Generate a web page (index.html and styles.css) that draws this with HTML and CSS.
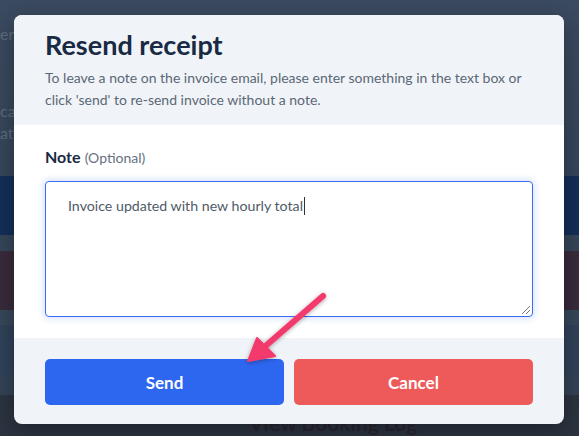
FILE: index.html
```html
<!DOCTYPE html>
<html lang="en">
<head>
<meta charset="utf-8">
<title>Resend receipt</title>
<link rel="stylesheet" href="styles.css">
</head>
<body>
<div class="page">
  <div class="bg-top">
    <div class="frag frag-er">er</div>
    <div class="frag frag-cat">cat</div>
    <div class="frag frag-ati">ati</div>
  </div>
  <div class="band band-blue"></div>
  <div class="band band-gap1"></div>
  <div class="band band-purple"></div>
  <div class="band band-gap2"></div>
  <div class="band band-slate"></div>
  <div class="band band-slate2"></div>
  <div class="bg-bottom"><span class="log">View Booking Log</span></div>
</div>

<div class="modal">
  <div class="modal-header">
    <h1 class="title">Resend receipt</h1>
    <p class="desc">To leave a note on the invoice email, please enter something in the text box or click 'send' to re-send invoice without a note.</p>
  </div>
  <div class="modal-body">
    <label class="label" for="note"><span class="label-main">Note</span> <span class="label-opt">(Optional)</span></label>
    <div class="textarea" id="note"><span>Invoice updated with new hourly total</span><span class="caret"></span><span class="grip"></span></div>
  </div>
  <div class="modal-footer">
    <button class="btn btn-send">Send</button>
    <button class="btn btn-cancel">Cancel</button>
  </div>
</div>

<svg class="arrow" width="579" height="436" viewBox="0 0 579 436" aria-hidden="true">
  <defs>
    <filter id="sh" x="-20%" y="-20%" width="140%" height="140%">
      <feDropShadow dx="0" dy="1" stdDeviation="2" flood-color="#000" flood-opacity="0.35"/>
    </filter>
  </defs>
  <g filter="url(#sh)">
    <line x1="323" y1="296" x2="262" y2="349" stroke="#f23a6c" stroke-width="6" stroke-linecap="round"/>
    <polygon points="248,361 257,338 275,356" fill="#f23a6c" stroke="#f23a6c" stroke-width="2" stroke-linejoin="round"/>
  </g>
</svg>
</body>
</html>
```

FILE: styles.css
```css
* { box-sizing: border-box; }
html, body { margin: 0; padding: 0; }
body {
  width: 579px;
  height: 436px;
  overflow: hidden;
  font-family: Lato, "Open Sans", sans-serif;
  position: relative;
  background: #2f3b4b;
}
.page {
  display: flex;
  flex-direction: column;
  height: 436px;
}
.bg-top {
  height: 176px;
  background: linear-gradient(180deg, #3b4b60 0%, #36465b 100%);
  display: flex;
  flex-direction: column;
}
.frag {
  color: #5f6c7d;
  font-size: 16px;
  line-height: 20px;
}
.frag-er { margin-top: 24px; }
.frag-cat { margin-top: 57px; }
.frag-ati { margin-top: 2px; }
.band { flex: none; }
.band-blue { height: 59px; background: #152f59; }
.band-gap1 { height: 16px; background: #36475a; }
.band-purple { height: 59px; background: #392b3c; }
.band-gap2 { height: 15px; background: #37485b; }
.band-slate { height: 50px; background: #30425a; }
.band-slate2 { height: 20px; background: #334357; }
.bg-bottom {
  flex: 1;
  background: #2c3441;
  padding-left: 249px;
  padding-top: 16px;
}
.log {
  color: #2a2531;
  font-weight: 700;
  font-size: 21px;
  line-height: 24px;
}

.modal {
  position: absolute;
  left: 14px;
  top: 15px;
  width: 550px;
  height: 409px;
  border-radius: 8px;
  overflow: hidden;
  background: #f0f4f8;
  box-shadow: 0 6px 24px rgba(0,0,0,0.35);
  display: flex;
  flex-direction: column;
}
.modal-header {
  height: 110px;
  padding: 14px 31px 0;
  background: #f0f4f8;
}
.title {
  margin: 0;
  font-size: 27px;
  line-height: 32px;
  font-weight: 700;
  color: #182a44;
}
.desc {
  margin: 6px 0 0;
  font-size: 14px;
  line-height: 22px;
  color: #5b6776;
}
.modal-body {
  height: 213px;
  background: #fff;
  padding: 21px 31px 0;
}
.label {
  display: block;
  height: 35px;
  line-height: 22px;
  color: #182a44;
}
.label-main { font-size: 16px; font-weight: 700; }
.label-opt { font-size: 14px; color: #667080; }
.textarea {
  position: relative;
  height: 136px;
  width: 488px;
  border: 1px solid #3a6cf0;
  border-radius: 4px;
  box-shadow: 0 0 6px 2px rgba(58,108,240,0.18);
  padding: 14px 22px;
  font-size: 14.2px;
  line-height: 20px;
  color: #4f5a68;
  background: #fff;
}
.caret {
  display: inline-block;
  width: 1px;
  height: 18px;
  background: #333;
  vertical-align: -4px;
  margin-left: 1px;
}
.grip {
  position: absolute;
  right: 2px;
  bottom: 2px;
  width: 8px;
  height: 8px;
  background: linear-gradient(135deg, transparent 45%, #777 45%, #777 52%, transparent 52%, transparent 70%, #777 70%, #777 77%, transparent 77%);
}
.modal-footer {
  flex: 1;
  padding: 21px 31px 0;
  display: flex;
  gap: 10px;
  align-items: flex-start;
}
.btn {
  flex: 1;
  height: 46px;
  border: none;
  border-radius: 5px;
  font-family: Lato, "Open Sans", sans-serif;
  font-weight: 700;
  font-size: 17px;
  color: #fff;
  padding: 0;
}
.btn-send { background: #2d67f0; }
.btn-cancel { background: #ee5a5a; }

.arrow {
  position: absolute;
  left: 0;
  top: 0;
  pointer-events: none;
}
```
